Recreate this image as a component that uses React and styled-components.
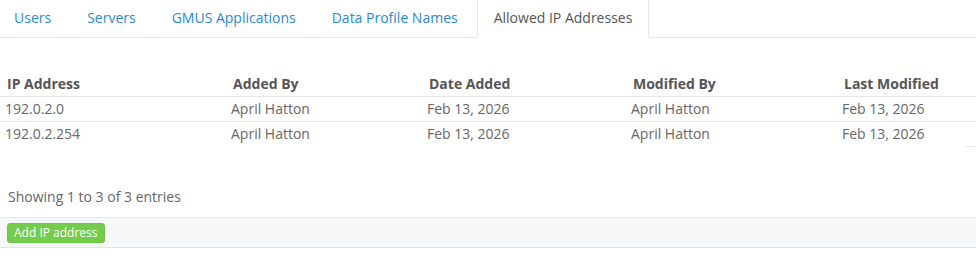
import React from 'react';
import styled, { createGlobalStyle } from 'styled-components';

const Global = createGlobalStyle`
  body {
    margin: 0;
    background: #fff;
    font-family: "Open Sans", "Liberation Sans", sans-serif;
    font-size: 14px;
    color: #555;
  }
`;

const tabs = ['Users', 'Servers', 'GMUS Applications', 'Data Profile Names', 'Allowed IP Addresses'];

const columns = [
  { key: 'ip', label: 'IP Address', width: 226 },
  { key: 'addedBy', label: 'Added By', width: 196 },
  { key: 'dateAdded', label: 'Date Added', width: 204 },
  { key: 'modifiedBy', label: 'Modified By', width: 211 },
  { key: 'lastModified', label: 'Last Modified', width: 139 },
];

const rows = [
  { ip: '192.0.2.0', addedBy: 'April Hatton', dateAdded: 'Feb 13, 2026', modifiedBy: 'April Hatton', lastModified: 'Feb 13, 2026' },
  { ip: '192.0.2.254', addedBy: 'April Hatton', dateAdded: 'Feb 13, 2026', modifiedBy: 'April Hatton', lastModified: 'Feb 13, 2026' },
];

const App = () => {
  return (
    <Page>
      <Global />
      <TabBar>
        {tabs.map((t) => (
          <Tab key={t} $active={t === 'Allowed IP Addresses'}>{t}</Tab>
        ))}
      </TabBar>
      <Table>
        <colgroup>
          {columns.map((c) => <col key={c.key} style={{ width: c.width }} />)}
        </colgroup>
        <thead>
          <tr>
            {columns.map((c) => <Th key={c.key}>{c.label}</Th>)}
          </tr>
        </thead>
        <tbody>
          {rows.map((r, i) => (
            <Row key={r.ip} $last={i === rows.length - 1}>
              {columns.map((c) => <Td key={c.key}>{r[c.key]}</Td>)}
            </Row>
          ))}
        </tbody>
      </Table>
      <Info>Showing 1 to 3 of 3 entries</Info>
      <Footer>
        <AddButton>Add IP address</AddButton>
      </Footer>
    </Page>
  );
};

const Page = styled.div`
  width: 976px;
  height: 262px;
  overflow: hidden;
`;

const TabBar = styled.div`
  display: flex;
  margin-left: -3px;
  border-bottom: 1px solid #e8e8e8;
`;

const Tab = styled.div`
  padding: 8px 16px 9px;
  line-height: 20px;
  margin-right: 2px;
  margin-bottom: -1px;
  border: 1px solid transparent;
  border-top: 0;
  color: ${(p) => (p.$active ? '#555' : '#2a8bd0')};
  white-space: nowrap;
  ${(p) => p.$active && `
    background: #fff;
    border-color: #e8e8e8;
    border-bottom-color: #fff;
  `}
`;

const Table = styled.table`
  width: 976px;
  margin-top: 33px;
  border-collapse: collapse;
  table-layout: fixed;
`;

const Th = styled.th`
  text-align: left;
  font-weight: 700;
  color: #555;
  padding: 3px 8px 3px 7px;
  line-height: 19px;
  border-bottom: 1px solid #e6e6e6;
`;

const Row = styled.tr`
  border-bottom: 1px solid ${(p) => (p.$last ? 'transparent' : '#e6e6e6')};
`;

const Td = styled.td`
  padding: 2px 5px 3px;
  line-height: 19px;
  color: #666;
  white-space: nowrap;
  position: relative;
  tr:last-child > &:last-child::after {
    content: '';
    position: absolute;
    right: 0;
    bottom: -1px;
    width: 10px;
    border-bottom: 1px solid #e6e6e6;
  }
`;

const Info = styled.div`
  padding: 40px 8px 0;
  line-height: 20px;
  color: #666;
`;

const Footer = styled.div`
  margin-top: 10px;
  padding: 5px 7px 4px;
  background: #f7f8fa;
  border-top: 1px solid #e6e7ea;
  border-bottom: 1px solid #e2e4e8;
  display: flex;
`;

const AddButton = styled.button`
  font-family: inherit;
  font-size: 12px;
  line-height: 18px;
  height: 20px;
  padding: 0 6px;
  color: #fff;
  background: #74cc4c;
  border: 1px solid #6dc645;
  border-radius: 3px;
`;

export default App;
